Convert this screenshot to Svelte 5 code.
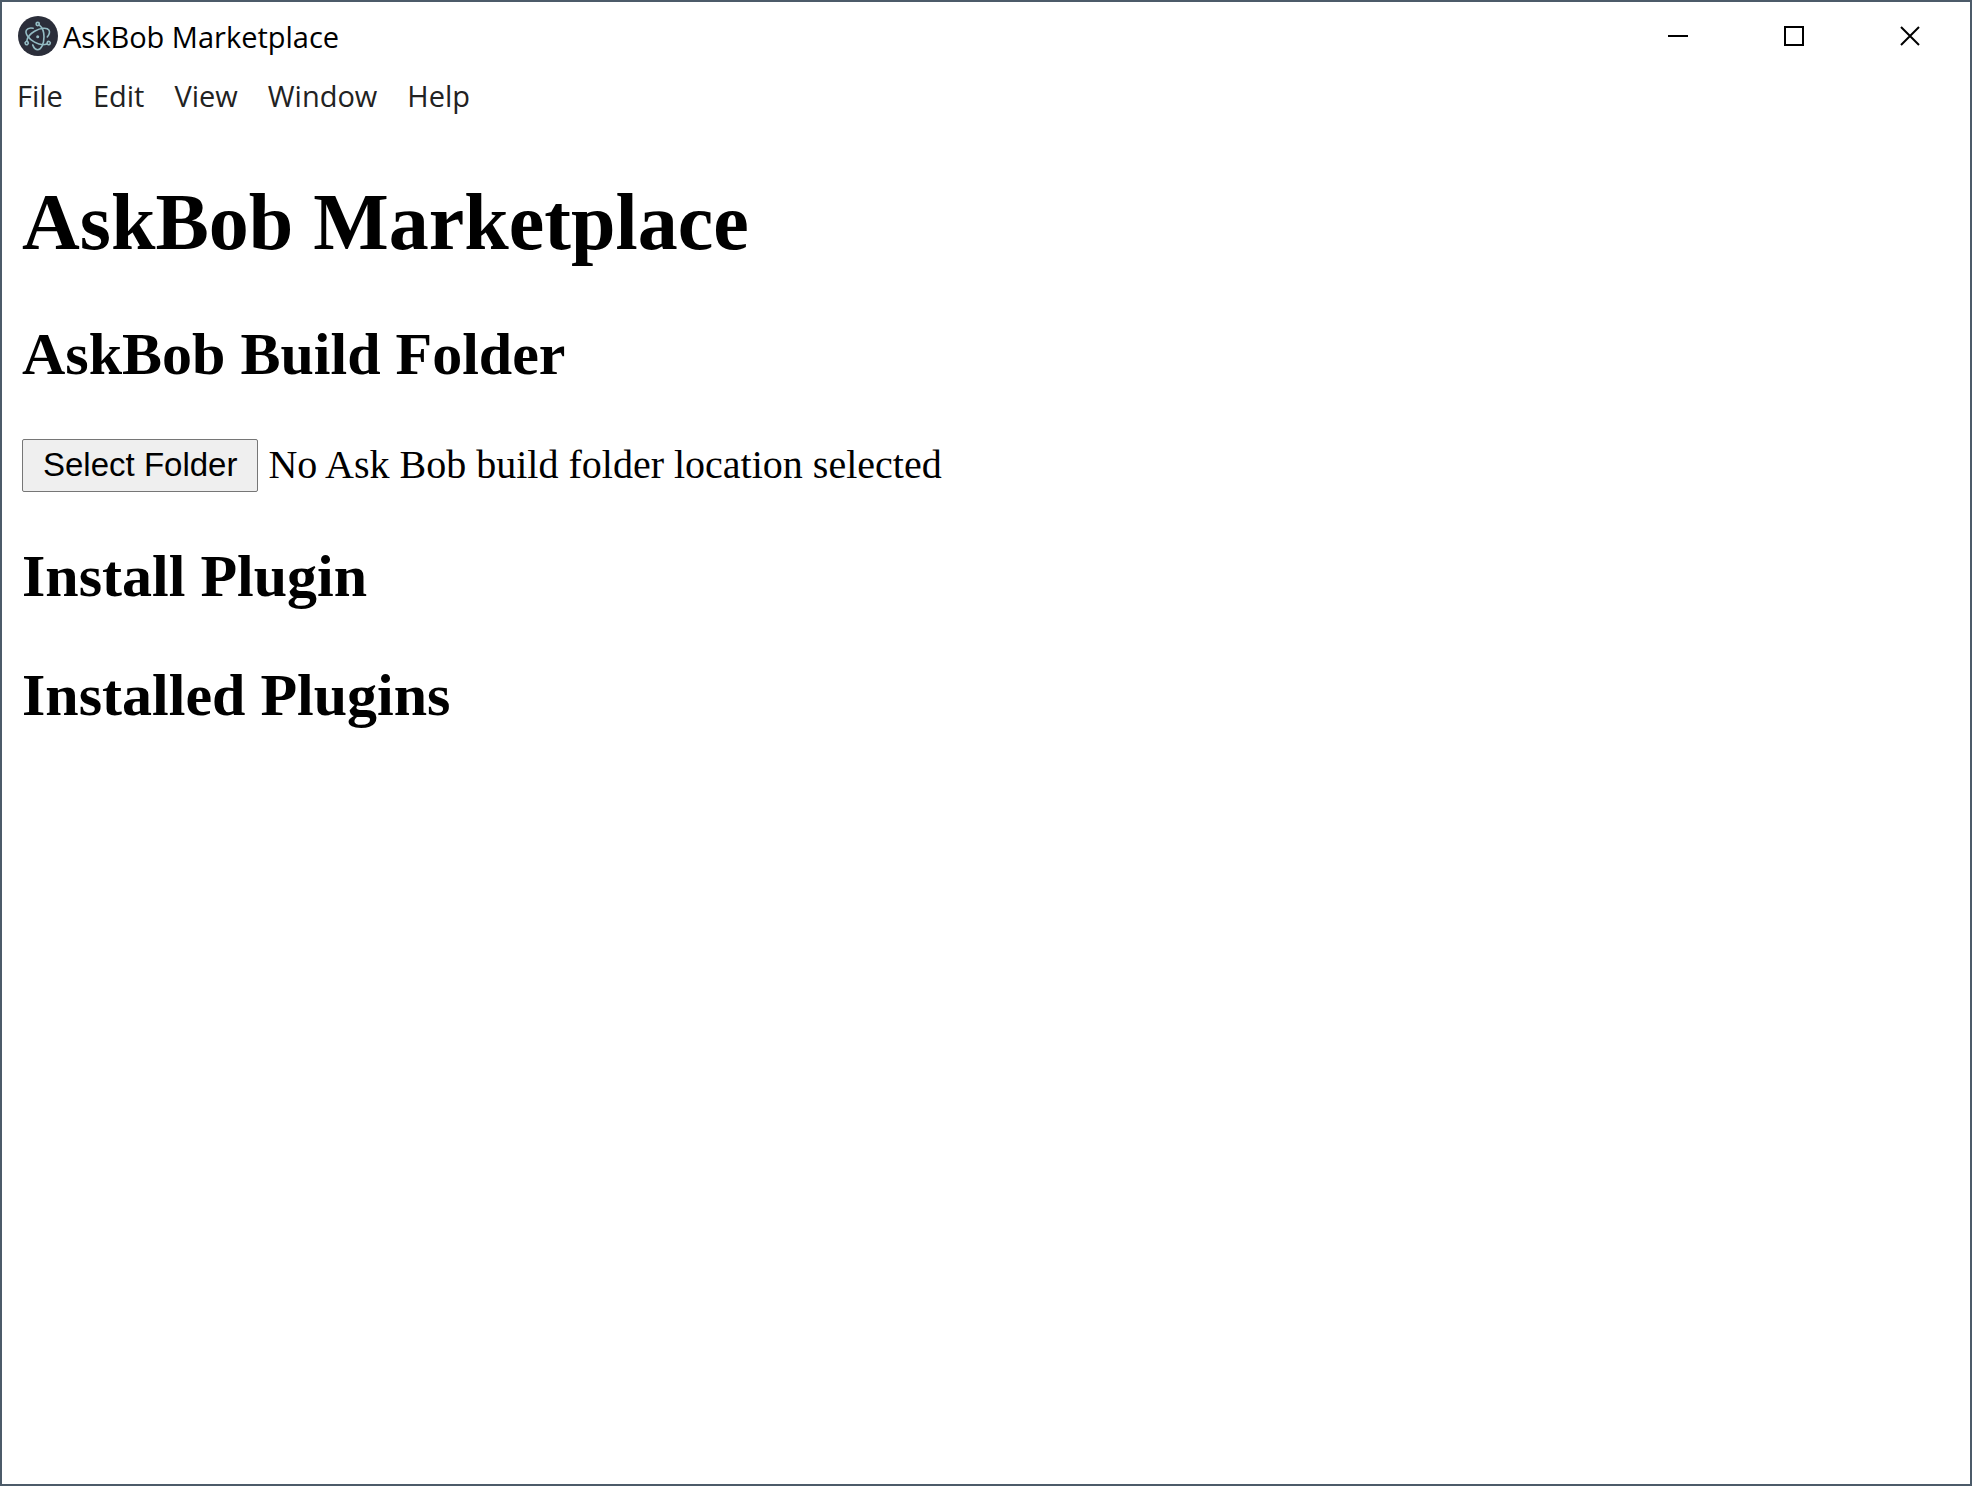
<script>
  const menus = ['File', 'Edit', 'View', 'Window', 'Help'];
  const orbits = [0, 120, 240];
</script>

<div class="window">
  <header class="titlebar">
    <svg class="logo" viewBox="0 0 40 40" aria-hidden="true">
      <circle cx="20" cy="20" r="20" fill="#2b2e3a" />
      <g transform="translate(19.7 20.7)" fill="none" stroke="#94bcc4" stroke-width="1.6" stroke-linecap="round">
        {#each orbits as angle}
          <g transform="rotate({angle})">
            <path d="M1.7 -11.6 C4.4 -9.4 6.3 -5 6.3 0 C6.3 7.2 3.5 13 0 13 C-2.1 13 -3.9 11.2 -5 8.2" />
            <circle cx="0" cy="-12.7" r="1.6" />
          </g>
        {/each}
        <circle r="1.5" fill="#94bcc4" stroke="none" />
      </g>
    </svg>
    <span class="title">AskBob Marketplace</span>
    <div class="controls">
      <button type="button" aria-label="Minimize">
        <svg viewBox="0 0 20 20"><path d="M0 10H20" /></svg>
      </button>
      <button type="button" aria-label="Maximize">
        <svg viewBox="0 0 20 20"><path d="M1 1H19V19H1Z" /></svg>
      </button>
      <button type="button" aria-label="Close">
        <svg viewBox="0 0 20 20"><path d="M1 1L19 19M19 1L1 19" /></svg>
      </button>
    </div>
  </header>

  <nav class="menubar">
    {#each menus as menu}
      <button type="button">{menu}</button>
    {/each}
  </nav>

  <main>
    <h1>AskBob Marketplace</h1>
    <h2>AskBob Build Folder</h2>
    <div class="picker">
      <button type="button" class="select">Select Folder</button>
      <span class="status">No Ask Bob build folder location selected</span>
    </div>
    <h2>Install Plugin</h2>
    <h2>Installed Plugins</h2>
  </main>
</div>

<style>
  :global(body) {
    margin: 0;
    background: #fff;
  }

  .window {
    box-sizing: border-box;
    min-height: 100vh;
    border: 2px solid #4c5b69;
    background: #fff;
    color: #000;
  }

  button {
    margin: 0;
    font: inherit;
    color: inherit;
  }

  .titlebar {
    display: flex;
    align-items: center;
    height: 68px;
    padding: 0 2px 0 16px;
    font-family: 'Open Sans', 'Noto Sans', sans-serif;
    font-size: 29px;
  }

  .logo {
    width: 40px;
    height: 40px;
    margin-right: 5px;
  }

  .controls {
    display: flex;
    align-self: stretch;
    margin-left: auto;
  }

  .controls button {
    display: flex;
    align-items: center;
    justify-content: center;
    width: 116px;
    padding: 0;
    border: 0;
    background: none;
  }

  .controls svg {
    width: 20px;
    height: 20px;
    fill: none;
    stroke: #000;
    stroke-width: 2;
  }

  .menubar {
    display: flex;
    align-items: center;
    gap: 30px;
    height: 51px;
    padding-left: 15px;
    font-family: 'Open Sans', 'Noto Sans', sans-serif;
    font-size: 29px;
    color: #222;
  }

  .menubar button {
    padding: 0;
    border: 0;
    background: none;
  }

  main {
    padding: 0 20px;
    font-family: 'Liberation Serif', 'Times New Roman', serif;
    font-size: 40px;
  }

  h1,
  h2 {
    font-weight: bold;
  }

  h1 {
    margin: 0;
    padding: 55px 0 2px;
    font-size: 80px;
    line-height: 92px;
  }

  h2 {
    margin: 50px 0;
    font-size: 60px;
    line-height: 69px;
  }

  .picker {
    display: flex;
    align-items: center;
    gap: 10px;
    line-height: 46px;
  }

  .status {
    padding-bottom: 2px;
  }

  .select {
    padding: 6px 20px 8px;
    border: 1px solid #767676;
    border-radius: 2px;
    background: #efefef;
    font-family: 'Liberation Sans', Arial, sans-serif;
    font-size: 33px;
    line-height: 37px;
  }
</style>
